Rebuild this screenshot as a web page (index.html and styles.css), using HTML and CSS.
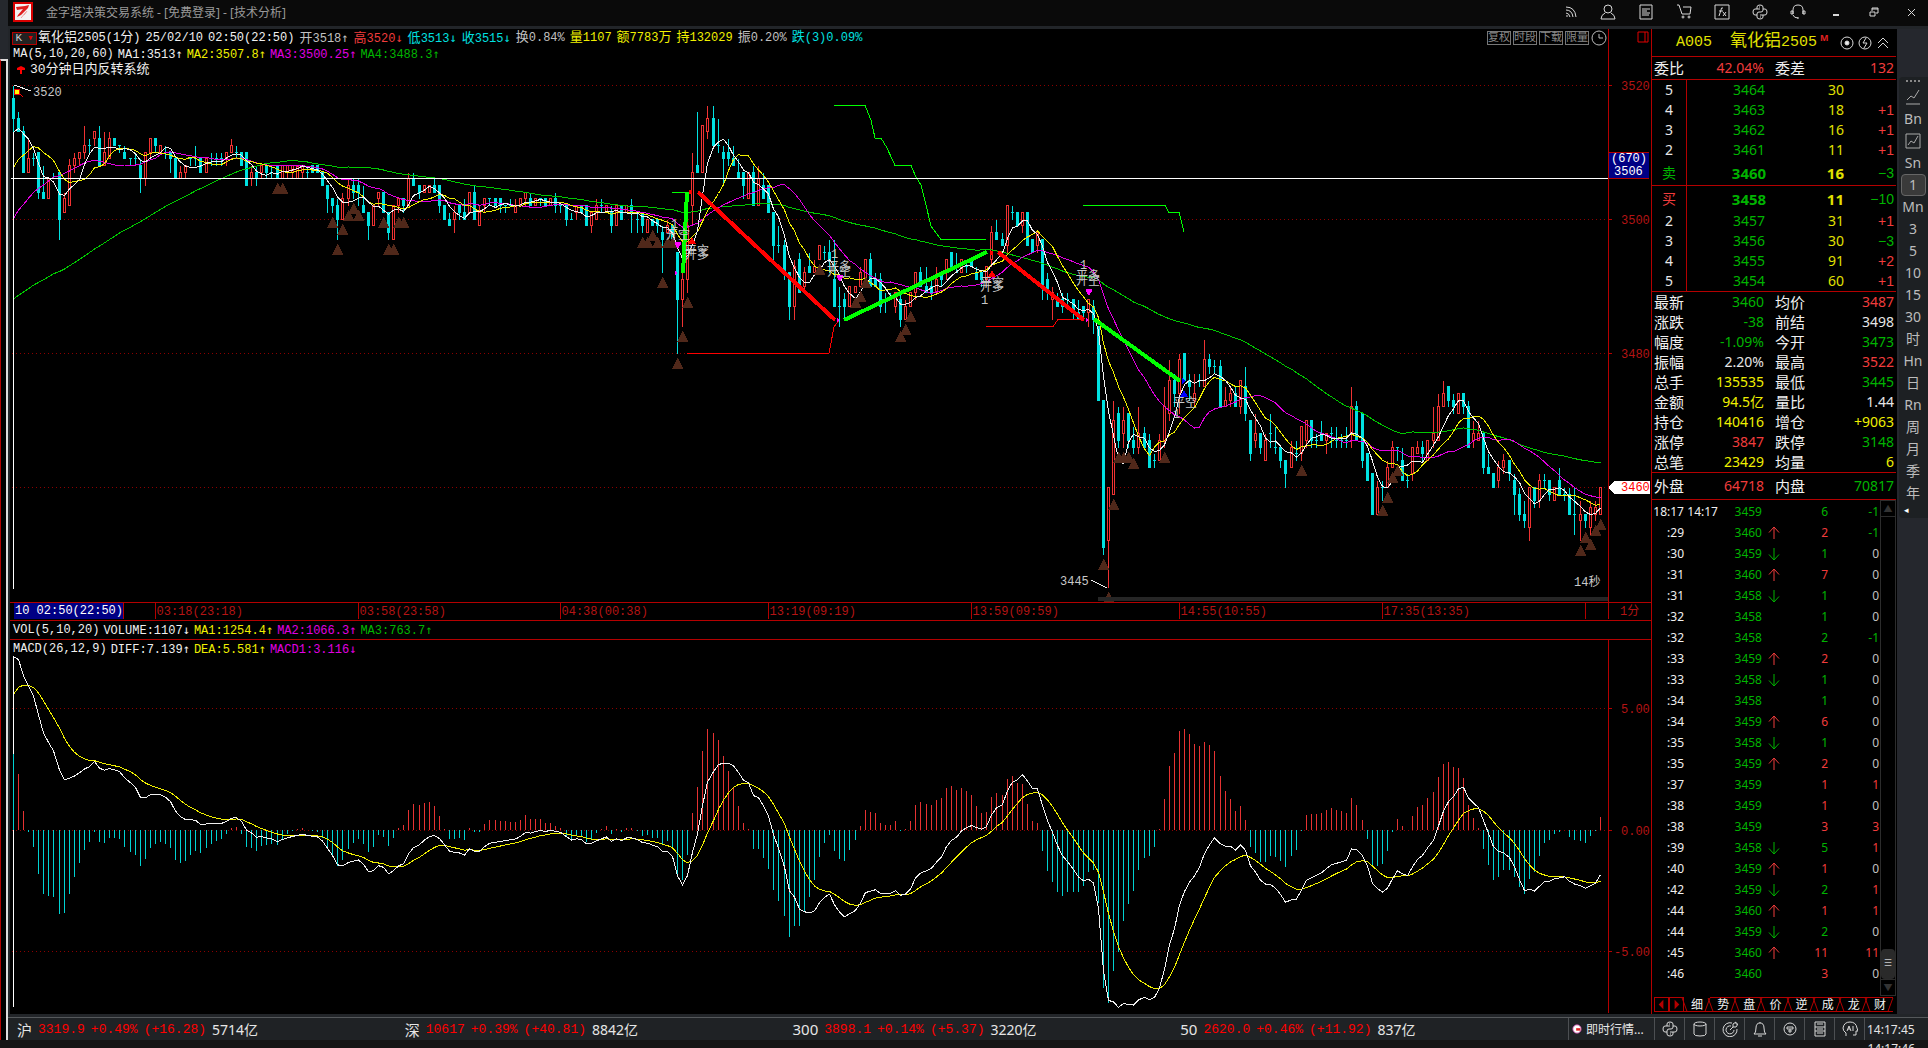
FILE: index.html
```html
<!DOCTYPE html>
<html lang="zh-CN">
<head>
    <meta charset="UTF-8">
    <meta name="viewport" content="width=device-width, initial-scale=1.0">
    <title>金字塔决策交易系统</title>
    <link rel="stylesheet" href="styles.css">
</head>
<body>

<svg class="defs" aria-hidden="true">
    <symbol id="i-up" viewBox="0 0 12 14"><path d="M6 13V1M1 6.500L6 1l5 5.500"/></symbol>
    <symbol id="i-down" viewBox="0 0 12 14"><path d="M6 1v12M1 7.500L6 13l5-5.500"/></symbol>
    <symbol id="i-python" viewBox="0 0 16 16">
        <path d="M5 5V3q0-2 3-2t3 2v3q0 2-2 2H7q-2 0-2 2v1H3q-2 0-2-3t2-3h5M11 11v2q0 2-3 2t-3-2v-2M11 5h2q2 0 2 3t-2 3H8"/>
        <path d="M7 3h1M8 13h1"/>
    </symbol>
</svg>

<div class="screen">
    <div class="edge"></div>

    <div class="window">
        <header class="titlebar">
            <svg class="logo" viewBox="0 0 20 20">
                <rect width="20" height="20" fill="#d80000" stroke="none"/>
                <rect x="2" y="2" width="16" height="16" fill="#f4f4f4" stroke="none"/>
                <path d="M3 5l9-1 4-1-1 3-7 7-4 2 1-2 5-6-6 1z" fill="#e02020" stroke="none"/>
                <path d="M8 16l5-6M11 13l3-4" stroke="#f0a0a0"/>
            </svg>
            <h1>金字塔决策交易系统 - [免费登录] - [技术分析]</h1>
            <nav class="title-icons">
                <button type="button" aria-label="资讯"><svg viewBox="0 0 16 16"><path d="M4 12h2M4 9q3 0 4 4M4 6q6 0 7 7M4 3q9 0 10 10"/></svg></button>
                <button type="button" aria-label="用户"><svg viewBox="0 0 16 16"><circle cx="8" cy="5" r="4"/><path d="M1 15q0-4 4-6M15 15q0-4-4-6M1 15h14"/></svg></button>
                <button type="button" aria-label="公告"><svg viewBox="0 0 16 16"><path d="M2 1h12v14H2zM4 5h8M4 7h5M4 9h8M4 11h7"/></svg></button>
                <button type="button" aria-label="商城"><svg viewBox="0 0 16 16"><path d="M1 1h2l3 9h8l1-7H7"/><circle cx="7" cy="13" r="1"/><circle cx="13" cy="13" r="1"/></svg></button>
                <button type="button" aria-label="公式"><svg viewBox="0 0 16 16"><path d="M1 1h14v14H1zM9 4q-2-1-2 2l-2 6M5 7h4M9 8l3 4M12 8l-3 4"/></svg></button>
                <button type="button" aria-label="Python"><svg viewBox="0 0 16 16"><use href="#i-python"/></svg></button>
                <button type="button" aria-label="客服"><svg viewBox="0 0 16 16"><path d="M3 10V6q0-5 5-5t5 5v4M1 7v3h2V7zM13 7v3h2V7zM3 11q1 3 5 3M7 14h2"/></svg></button>
                <button type="button" aria-label="最小化"><svg viewBox="0 0 16 16"><path d="M5 11h6" stroke-width="2"/></svg></button>
                <button type="button" aria-label="还原"><svg viewBox="0 0 16 16"><path d="M4 8h5v4H4zM6 7V4h6v5h-2M6 5h6"/></svg></button>
                <button type="button" aria-label="关闭"><svg viewBox="0 0 16 16"><path d="M4 5l7 7M11 5l-7 7"/></svg></button>
            </nav>
        </header>

        <div class="body">
            <main class="charts">
                <section class="pane-head">
                    <div class="pane-text">
                        <div class="line">
                            <button type="button" class="k-button">K<span>▾</span></button>
                            <span class="w"><b>氧化铝</b>2505(1<b>分</b>)</span>
                            <span class="w">25/02/10</span>
                            <span class="w">02:50(22:50)</span>
                            <span class="g"><b>开</b>3518<i>↑</i></span>
                            <span class="r"><b>高</b>3520<i>↓</i></span>
                            <span class="c"><b>低</b>3513<i>↓</i></span>
                            <span class="c"><b>收</b>3515<i>↓</i></span>
                            <span class="g"><b>换</b>0.84%</span>
                            <span class="y"><b>量</b>1107</span>
                            <span class="y"><b>额</b>7783<b>万</b></span>
                            <span class="y"><b>持</b>132029</span>
                            <span class="g"><b>振</b>0.20%</span>
                            <span class="c"><b>跌</b>(3)0.09%</span>
                            <div class="chart-tools">
                                <button type="button">复权</button>
                                <button type="button">时段</button>
                                <button type="button">下载</button>
                                <button type="button">限量</button>
                                <svg viewBox="0 0 16 16"><circle cx="8" cy="8" r="7"/><path d="M8 4v4h4"/></svg>
                            </div>
                        </div>
                        <div class="line tight">
                            <span class="w">MA(5,10,20,60)</span>
                            <span class="w">MA1:3513<i>↑</i></span>
                            <span class="y">MA2:3507.8<i>↑</i></span>
                            <span class="m">MA3:3500.25<i>↑</i></span>
                            <span class="gr">MA4:3488.3<i>↑</i></span>
                        </div>
                        <div class="line system">
                            <svg viewBox="0 0 8 8"><path d="M4 0l4 2v2H5v4H3V4H0V2z"/></svg>
                            <span class="w"><b>30分钟日内反转系统</b></span>
                        </div>
                    </div>
                    <div class="pane-axis"><svg viewBox="0 0 12 12"><path d="M1 1h10v10H1zM8 1v10"/></svg></div>
                </section>
                <svg class="plot" id="price-plot" viewBox="10 77 1641 544"></svg>

                <section class="vol-line line tight">
                    <span class="w">VOL(5,10,20)</span>
                    <span class="w">VOLUME:1107<i>↓</i></span>
                    <span class="y">MA1:1254.4<i>↑</i></span>
                    <span class="m">MA2:1066.3<i>↑</i></span>
                    <span class="gr">MA3:763.7<i>↑</i></span>
                </section>

                <section class="pane-head">
                    <div class="pane-text">
                        <div class="line tight">
                            <span class="w">MACD(26,12,9)</span>
                            <span class="w">DIFF:7.139<i>↑</i></span>
                            <span class="y">DEA:5.581<i>↑</i></span>
                            <span class="m">MACD1:3.116<i>↓</i></span>
                        </div>
                    </div>
                    <div class="pane-axis"></div>
                </section>
                <svg class="plot" id="macd-plot" viewBox="10 656 1641 358"></svg>
            </main>

            <aside class="quote">
                <div class="quote-title">
                    <span class="code">A005</span>
                    <span class="code"><b>氧化铝</b>2505</span>
                    <sup>M</sup>
                    <svg viewBox="0 0 16 16"><circle cx="8" cy="8" r="6"/><circle cx="8" cy="8" r="2" fill="#eee"/></svg>
                    <svg viewBox="0 0 16 16"><circle cx="8" cy="8" r="6"/><path d="M9 3L6 8h4l-3 5"/></svg>
                    <svg viewBox="0 0 16 16"><path d="M3 8l5-5 5 5M3 13l5-5 5 5"/></svg>
                </div>

                <table class="stats single">
                    <tr><th>委比</th><td class="r">42.04%</td><th>委差</th><td class="r">132</td></tr>
                </table>

                <table class="book">
                    <tr><th>5</th><td>3464</td><td>30</td><td></td></tr>
                    <tr><th>4</th><td>3463</td><td>18</td><td class="r">+1</td></tr>
                    <tr><th>3</th><td>3462</td><td>16</td><td class="r">+1</td></tr>
                    <tr><th>2</th><td>3461</td><td>11</td><td class="r">+1</td></tr>
                    <tr class="best"><th class="gr">卖</th><td>3460</td><td>16</td><td class="gr">−3</td></tr>
                </table>
                <table class="book">
                    <tr class="best"><th class="r">买</th><td>3458</td><td>11</td><td class="gr">−10</td></tr>
                    <tr><th>2</th><td>3457</td><td>31</td><td class="r">+1</td></tr>
                    <tr><th>3</th><td>3456</td><td>30</td><td class="gr">−3</td></tr>
                    <tr><th>4</th><td>3455</td><td>91</td><td class="r">+2</td></tr>
                    <tr><th>5</th><td>3454</td><td>60</td><td class="r">+1</td></tr>
                </table>

                <table class="stats">
                    <tr><th>最新</th><td class="gr">3460</td><th>均价</th><td class="r">3487</td></tr>
                    <tr><th>涨跌</th><td class="gr">-38</td><th>前结</th><td>3498</td></tr>
                    <tr><th>幅度</th><td class="gr">-1.09%</td><th>今开</th><td class="gr">3473</td></tr>
                    <tr><th>振幅</th><td>2.20%</td><th>最高</th><td class="r">3522</td></tr>
                    <tr><th>总手</th><td class="y">135535</td><th>最低</th><td class="gr">3445</td></tr>
                    <tr><th>金额</th><td class="y">94.5亿</td><th>量比</th><td>1.44</td></tr>
                    <tr><th>持仓</th><td class="y">140416</td><th>增仓</th><td class="y">+9063</td></tr>
                    <tr><th>涨停</th><td class="r">3847</td><th>跌停</th><td class="gr">3148</td></tr>
                    <tr><th>总笔</th><td class="y">23429</td><th>均量</th><td class="y">6</td></tr>
                </table>
                <table class="stats last">
                    <tr><th>外盘</th><td class="r">64718</td><th>内盘</th><td class="gr">70817</td></tr>
                </table>

                <div class="ticks">
                    <table id="tick-table"></table>
                    <div class="scroll">
                        <button type="button" aria-label="向上">▲</button>
                        <div class="track"><div class="thumb">☰</div></div>
                        <button type="button" aria-label="向下">▼</button>
                    </div>
                </div>

                <div class="tabs">
                    <button type="button" class="step" aria-label="上一页"><svg viewBox="0 0 14 14"><path d="M9 2v10L4 7z"/></svg></button>
                    <button type="button" class="step" aria-label="下一页"><svg viewBox="0 0 14 14"><path d="M5 2v10l5-5z"/></svg></button>
                    <button type="button" class="tab on">细</button>
                    <button type="button" class="tab">势</button>
                    <button type="button" class="tab">盘</button>
                    <button type="button" class="tab">价</button>
                    <button type="button" class="tab">逆</button>
                    <button type="button" class="tab">成</button>
                    <button type="button" class="tab">龙</button>
                    <button type="button" class="tab">财</button>
                </div>
            </aside>

            <nav class="periods">
                <div class="period-box">
                    <span class="grip"></span>
                    <button type="button" aria-label="分时"><svg viewBox="0 0 16 16"><path d="M1 15h14M2 11l4-4 3 2 5-8"/></svg></button>
                    <button type="button">Bn</button>
                    <button type="button" aria-label="走势"><svg viewBox="0 0 16 16"><path d="M1 1h14v14H1zM3 12l3-4 3 2 4-7"/></svg></button>
                    <button type="button">Sn</button>
                    <button type="button" class="on">1</button>
                    <button type="button">Mn</button>
                    <button type="button">3</button>
                    <button type="button">5</button>
                    <button type="button">10</button>
                    <button type="button">15</button>
                    <button type="button">30</button>
                    <button type="button">时</button>
                    <button type="button">Hn</button>
                    <button type="button">日</button>
                    <button type="button">Rn</button>
                    <button type="button">周</button>
                    <button type="button">月</button>
                    <button type="button">季</button>
                    <button type="button">年</button>
                    <span class="more">◂</span>
                </div>
            </nav>
        </div>

        <footer class="status">
            <div class="indices">
                <div><b>沪</b><span>3319.9</span><span>+0.49%</span><span>(+16.28)</span><em>5714亿</em></div>
                <div><b>深</b><span>10617</span><span>+0.39%</span><span>(+40.81)</span><em>8842亿</em></div>
                <div><b>300</b><span>3898.1</span><span>+0.14%</span><span>(+5.37)</span><em>3220亿</em></div>
                <div><b>50</b><span>2620.0</span><span>+0.46%</span><span>(+11.92)</span><em>837亿</em></div>
            </div>
            <button type="button" class="news"><svg viewBox="0 0 12 12"><circle cx="6" cy="6" r="5" fill="#fff" stroke="#c040a0"/><path d="M5 5h5v3H5z" fill="#e02020" stroke="none"/></svg>即时行情...</button>
            <button type="button" class="cell" aria-label="Python"><svg viewBox="0 0 16 16"><use href="#i-python"/></svg></button>
            <button type="button" class="cell" aria-label="数据"><svg viewBox="0 0 16 16"><ellipse cx="8" cy="3" rx="6" ry="2"/><path d="M2 3v10q0 2 6 2t6-2V3"/></svg></button>
            <button type="button" class="cell" aria-label="雷达"><svg viewBox="0 0 16 16"><path d="M10 2a7 7 0 1 0 5 6M9 5a4 4 0 1 0 3 4M8 9l3-3V3l3-2v2h2l-2 3h-3"/></svg></button>
            <button type="button" class="cell" aria-label="提醒"><svg viewBox="0 0 16 16"><path d="M8 1v1M2 13q2-1 2-6 0-5 4-5t4 5q0 5 2 6zM6 15h4"/></svg></button>
            <button type="button" class="cell" aria-label="连接"><svg viewBox="0 0 16 16"><circle cx="8" cy="8" r="6"/><path d="M5 6h6v2H5zM8 8v4M6 10h4"/></svg></button>
            <button type="button" class="cell" aria-label="服务器"><svg viewBox="0 0 16 16"><path d="M3 1h10v14H3zM3 6h10M3 10h10M5 3h6M5 8h6M5 12h6"/></svg></button>
            <button type="button" class="cell" aria-label="AI"><svg viewBox="0 0 16 16"><path d="M4 15v-3Q1 10 1 7q1-6 7-6t7 6l1 3h-2v4h-3M5 10l2-5 2 5M6 8h2M11 5v5"/></svg></button>
            <time>14:17:45</time>
        </footer>
    </div>

    <div class="under"><time>14:17:46</time></div>
</div>

<script src="script.js"></script>
</body>
</html>
```
FILE: styles.css
```css
* {
    box-sizing: border-box;
}

body {
    margin: 0;
    background: #151515;
    color: #e6e6e6;
    font-family: "Noto Sans", "Noto Sans CJK SC", sans-serif;
    font-size: 14px;
}

button {
    margin: 0;
    padding: 0;
    border: 0;
    background: none;
    color: inherit;
    font: inherit;
    cursor: pointer;
}

svg {
    display: block;
    fill: none;
    stroke: #d8d8d8;
}

table {
    border-collapse: separate;
    border-spacing: 0;
}

.defs {
    position: absolute;
    width: 0;
    height: 0;
}

/* 颜色 */
.w { color: #f0f0f0; }
.g { color: #c0c0c0; }
.r { color: #f03c3c; }
.c { color: #00e1e1; }
.y { color: #f0f000; }
.m { color: #e100e1; }
.gr { color: #00b400; }

/* 整体框架 */
.screen {
    display: grid;
    grid-template-columns: 8px 1fr;
    overflow: hidden;
}

.edge {
    margin-top: 59px;
    border-top: 2px solid #ddd;
    border-right: 2px solid #ddd;
    border-left: 1px solid #b40000;
    background: #000;
    box-shadow: 0 -59px 0 #25282d;
}

.window {
    min-width: 0;
    background: #222529;
}

.titlebar {
    display: flex;
    align-items: center;
    height: 26px;
    margin-bottom: 3px;
    padding: 0 8px 2px 5px;
    background: #0a0a0a;
}

.logo {
    width: 20px;
    height: 20px;
}

.titlebar h1 {
    flex: 1;
    margin: 0 0 0 13px;
    color: #999;
    font-size: 12px;
    font-weight: 400;
}

.title-icons {
    display: flex;
    gap: 22px;
}

.title-icons svg {
    width: 16px;
    height: 16px;
}

.body {
    display: grid;
    grid-template-columns: 1fr 246px 31px;
    margin-bottom: 3px;
    margin-left: 2px;
}

/* 图表区 */
.charts {
    min-width: 0;
    background: #000;
}

.pane-head {
    display: grid;
    grid-template-columns: 1fr 43px;
}

.pane-axis {
    border-left: 1px solid #b40000;
}

.pane-axis svg {
    width: 12px;
    height: 12px;
    margin: 2px 0 0 28px;
    stroke: #e00000;
}

.line {
    display: flex;
    align-items: center;
    gap: 5px;
    height: 16px;
    padding: 2px 0 0 3px;
    font-family: "Liberation Mono", "Noto Sans CJK SC", monospace;
    font-size: 12px;
    line-height: 14px;
    white-space: nowrap;
}

.line b {
    font-size: 13px;
    font-weight: 400;
}

.line i {
    font-family: "DejaVu Sans Mono", monospace;
    font-style: normal;
}

.line.tight {
    gap: 4px;
}

.k-button {
    display: flex;
    justify-content: space-around;
    width: 25px;
    height: 13px;
    margin: 0 -4px 0 -1px;
    border: 1px solid #b40000;
    background: #222;
    font-size: 11px;
    line-height: 11px;
    color: #ccc;
}

.k-button span {
    color: #d00;
}

.line.system {
    gap: 5px;
    padding-left: 7px;
}

.system svg {
    width: 8px;
    height: 8px;
    fill: #f00;
    stroke: none;
}

.chart-tools {
    display: flex;
    align-items: center;
    gap: 2px;
    margin-left: auto;
    padding-right: 1px;
}

.chart-tools button {
    width: 24px;
    height: 14px;
    border: 1px solid #777;
    color: #888;
    font-size: 11px;
    line-height: 12px;
}

.chart-tools svg {
    width: 16px;
    height: 16px;
    stroke: #bbb;
}

.plot {
    width: 100%;
    height: auto;
    shape-rendering: crispEdges;
}

.plot text {
    stroke: none;
    font-family: "Liberation Mono", "Noto Sans CJK SC", monospace;
    font-size: 12px;
}

.vol-line {
    height: 19px;
    padding-top: 0;
    border-bottom: 1px solid #b40000;
}

/* 图形 */
.grid { stroke: #8c0000; stroke-dasharray: 1 3; }
.axis { stroke: #b40000; }
.axis-text { fill: #b41414; }
.up { fill: #000; stroke: #f03232; }
.dn { fill: #00e1e1; stroke: #00e1e1; }
.bar-up { stroke: #e63232; }
.bar-dn { stroke: #00d2d2; }
.ma { stroke-width: 1; }
.ma-w { stroke: #f0f0f0; }
.ma-y { stroke: #f0f000; }
.ma-m { stroke: #e100e1; }
.ma-g { stroke: #00c800; }
.mark { fill: #50281a; stroke: none; }
.cursor { stroke: #fff; }
.thick-g { stroke: #0f0; stroke-width: 4; }
.thick-r { stroke: #f00; stroke-width: 4; }
.thin-g { stroke: #0f0; }
.thin-r { stroke: #f00; }
.sig-m { fill: #f0f; stroke: none; }
.sig-r { fill: #f00; stroke: none; }
.sig-b { fill: #00f; stroke: none; }
.note { fill: #c8c8c8; }
.blue-box { fill: #000084; stroke: none; }
.range { fill: #262626; stroke: none; }
.white { fill: #fff; stroke: none; }
.lens { fill: #ff0; stroke: #e00; }

/* 报价面板 */
.quote {
    display: flex;
    flex-direction: column;
    padding-right: 1px;
    border-left: 1px solid #b40000;
    background: #000;
}

.quote-title {
    display: flex;
    align-items: center;
    height: 28px;
    padding: 0 4px 0 24px;
    border-bottom: 1px solid #b40000;
    color: #e1e100;
}

.quote-title .code {
    margin-right: 18px;
    font-family: "Liberation Mono", "Noto Sans CJK SC", monospace;
    font-size: 15px;
    line-height: 24px;
    white-space: nowrap;
}

.quote-title .code + .code {
    margin-right: 3px;
}

.quote-title b {
    font-size: 17px;
    font-weight: 400;
}

.quote-title sup {
    align-self: flex-start;
    margin-right: auto;
    padding-top: 4px;
    color: #e02020;
    font-size: 9px;
    font-weight: 700;
    line-height: 9px;
}

.quote-title svg {
    width: 16px;
    height: 16px;
    margin: 0 1px;
}

.stats {
    width: 100%;
    table-layout: fixed;
    border-bottom: 1px solid #b40000;
}

.stats tr {
    height: 20px;
}

.stats.single tr {
    height: 22px;
}

.stats.last tr {
    height: 26px;
}

.stats th,
.stats td {
    padding: 0 2px;
    line-height: 20px;
    white-space: nowrap;
}

.stats th {
    width: 42px;
    color: #f0f0f0;
    font-size: 15px;
    font-weight: 400;
    text-align: left;
}

.stats th + td {
    text-align: right;
}

.stats td:nth-child(2) {
    width: 72px;
}

.stats th:nth-child(3) {
    width: 50px;
    padding-left: 9px;
}

.book {
    width: 100%;
    table-layout: fixed;
    border-bottom: 1px solid #b40000;
}

.book tr {
    height: 20px;
}

.book .best {
    height: 25px;
}

.book th,
.book td {
    padding: 0;
    line-height: 20px;
}

.book th {
    width: 35px;
    border-right: 1px solid #b40000;
    font-weight: 400;
}

.book td:nth-child(2) {
    width: 124px;
    color: #00b400;
    text-align: center;
}

.book td:nth-child(3) {
    width: 33px;
    color: #e1e100;
    text-align: right;
}

.book td:nth-child(4) {
    padding-right: 2px;
    font-family: "Liberation Sans", sans-serif;
    text-align: right;
}

.best td:nth-child(2),
.best td:nth-child(3) {
    font-size: 15px;
    font-weight: 700;
}

/* 成交明细 */
.ticks {
    display: flex;
    align-items: flex-start;
    flex: 1;
    font-size: 12px;
}

.ticks table {
    flex: 1;
    table-layout: fixed;
    margin-top: 1px;
}

.ticks tr {
    height: 21px;
}

.ticks td {
    padding: 0;
    line-height: 21px;
    text-align: right;
}

.ticks td:nth-child(1) { width: 32px; }
.ticks td:nth-child(2) { width: 34px; }
.ticks td:nth-child(3) { width: 44px; }
.ticks td:nth-child(4) { width: 24px; }
.ticks td:nth-child(5) { width: 42px; }
.ticks td:nth-child(6) { padding-right: 1px; }

.ticks td svg {
    width: 12px;
    height: 14px;
    margin: 0 auto;
    stroke: currentColor;
}

.scroll {
    display: flex;
    flex-direction: column;
    align-self: stretch;
    width: 16px;
    border: 1px solid #2c2c2c;
}

.scroll button {
    height: 15px;
    color: #333;
    font-size: 9px;
    line-height: 14px;
}

.track {
    display: flex;
    flex: 1;
    align-items: flex-end;
    border-top: 1px solid #2c2c2c;
    border-bottom: 1px solid #2c2c2c;
}

.thumb {
    width: 14px;
    height: 30px;
    border-radius: 4px;
    background: #2a2a2a;
    color: #ccc;
    font-size: 9px;
    line-height: 28px;
    text-align: center;
}

.tabs {
    display: flex;
    height: 18px;
    padding: 1px 3px 1px 2px;
}

.step {
    width: 15px;
    height: 15px;
    border: 1px solid #b40000;
}

.step svg {
    width: 13px;
    height: 13px;
    fill: #b40000;
    stroke: none;
}

.tab {
    position: relative;
    flex: 1;
    height: 15px;
    border-top: 1px solid #b40000;
    border-bottom: 1px solid #b40000;
    color: #f0f0f0;
    font-size: 12px;
    line-height: 14px;
}

.tab.on {
    border-top-color: transparent;
}

.tab::before {
    position: absolute;
    top: 0;
    left: 0;
    width: 1px;
    height: 13px;
    background: #b40000;
    content: "";
    transform: skewX(20deg);
}

.tab::after {
    position: absolute;
    top: 0;
    right: 2px;
    width: 1px;
    height: 13px;
    background: #b40000;
    content: "";
    transform: skewX(-20deg);
}

/* 周期工具栏 */
.periods {
    padding: 48px 0 0 2px;
    background: #25272d;
}

.period-box {
    display: flex;
    flex-direction: column;
    align-items: center;
    height: 441px;
    padding-right: 1px;
    border-radius: 4px 0 0 4px;
    background: #1d2023;
    color: #bcbcbc;
}

.period-box button {
    display: flex;
    align-items: center;
    justify-content: center;
    width: 25px;
    height: 22px;
    border-radius: 4px;
    font-size: 14px;
    line-height: 20px;
}

.period-box button.on {
    border: 1px solid #666;
    background: #3a3a3a;
}

.period-box svg {
    width: 16px;
    height: 16px;
    stroke: #aaa;
}

.grip {
    width: 14px;
    height: 2px;
    margin: 3px 0 4px;
    border-top: 2px dotted #888;
}

.more {
    align-self: flex-start;
    margin-left: 5px;
    color: #fff;
    font-size: 9px;
    line-height: 12px;
}

/* 状态栏 */
.status {
    display: flex;
    height: 23px;
    border-top: 1px solid #55585b;
    background: #1f2225;
}

.indices {
    display: grid;
    flex: 1;
    grid-template-columns: repeat(4, 1fr);
    padding-left: 9px;
}

.indices div {
    display: flex;
    align-items: center;
    gap: 6px;
    white-space: nowrap;
}

.indices b {
    font-size: 15px;
    font-weight: 400;
}

.indices span {
    color: #f00;
    font-family: "Liberation Mono", monospace;
    font-size: 13px;
}

.indices em {
    font-style: normal;
}

.status button,
.status time {
    display: flex;
    align-items: center;
    justify-content: center;
    border-left: 1px solid #4c4f52;
}

.status .news {
    justify-content: flex-start;
    width: 86px;
    gap: 4px;
    padding-left: 3px;
    font-size: 12px;
}

.news svg {
    width: 10px;
    height: 10px;
}

.cell {
    width: 30px;
}

.cell svg {
    width: 16px;
    height: 16px;
}

.status time {
    width: 64px;
    justify-content: flex-start;
    padding-left: 2px;
    font-size: 12px;
}

.under {
    grid-column: 1 / -1;
    display: flex;
    justify-content: flex-end;
    height: 8px;
    padding-right: 13px;
    overflow: hidden;
    background: #151515;
    font-size: 12px;
}
```
FILE: script.js
```js
// 每根K线: [开, 收, 高, 低]，都减去 3400
const bars = [
    [118,115,120,113],[115,113,116,113],[113,107,114,107],[107,109,112,107],[109,109,110,108],[110,104,110,103],
    [104,103,108,103],[103,106,106,103],[106,106,107,106],[107,100,107,97],[101,103,104,101],[102,108,109,102],
    [108,109,110,107],[109,110,110,108],[110,111,114,109],[111,111,112,110],[112,113,113,111],[112,108,114,108],
    [108,110,113,108],[109,112,113,109],[112,111,112,111],[111,111,111,110],[110,109,111,109],[109,109,109,108],
    [109,109,110,108],[108,106,109,104],[106,110,110,105],[110,112,112,109],[112,111,112,110],[110,111,111,110],
    [110,110,111,109],[110,109,110,107],[109,106,109,106],[106,107,108,106],[107,108,108,106],[109,109,109,108],
    [109,109,111,108],[109,107,109,107],[107,109,109,107],[109,109,110,108],[109,109,110,108],[109,109,110,108],
    [109,110,110,108],[110,111,112,110],[110,110,111,109],[110,108,110,108],[110,105,110,105],[106,107,108,105],
    [107,106,108,105],[107,108,108,106],[108,107,108,106],[107,107,108,106],[108,106,108,106],[106,108,108,106],
    [107,108,108,106],[107,108,108,106],[106,108,108,106],[107,108,108,106],[107,107,108,106],[108,107,108,107],
    [108,107,108,107],[107,105,107,105],[105,103,105,101],[103,102,103,101],[102,100,103,97],[100,103,104,100],
    [103,105,106,102],[105,104,106,103],[105,104,106,102],[102,101,105,101],[101,99,101,97],[99,102,102,99],
    [103,104,104,102],[104,101,104,101],[101,98,101,97],[97,102,102,97],[102,103,103,101],[103,102,103,101],
    [102,106,107,102],[106,105,107,105],[105,104,105,103],[104,105,105,104],[104,105,105,104],[105,104,106,104],
    [105,102,105,101],[102,100,102,100],[100,99,101,99],[100,101,102,98],[102,101,102,100],[101,100,103,100],
    [101,104,104,101],[104,100,105,100],[99,101,102,99],[102,103,103,101],[103,103,103,102],[103,102,103,102],
    [103,102,103,101],[102,102,102,101],[102,102,103,102],[101,102,103,101],[102,103,103,102],[103,104,104,102],
    [103,102,104,102],[102,103,103,102],[103,103,103,102],[103,102,103,102],[102,103,103,102],[103,102,104,101],
    [102,102,102,101],[102,100,102,99],[100,100,101,100],[101,102,102,100],[102,101,102,101],[102,99,102,99],
    [99,101,101,98],[100,102,103,100],[102,102,103,101],[101,102,102,101],[101,99,102,98],[99,102,102,99],
    [102,100,102,100],[101,102,102,101],[102,101,103,98],[100,100,101,98],[101,99,101,98],[98,100,100,98],
    [100,99,100,99],[100,99,100,98],[98,97,99,92],[98,99,100,98],[99,96,99,98],[95,88,95,80],
    [88,91,92,84],[91,99,102,89],[102,107,110,99],[108,107,116,107],[107,114,114,107],[113,115,117,112],
    [115,111,117,111],[111,111,115,110],[110,109,111,105],[110,109,112,108],[109,108,111,108],[107,106,109,106],
    [107,105,107,103],[103,107,107,103],[107,102,108,102],[102,106,108,102],[105,103,107,103],[105,101,105,101],
    [101,96,101,94],[96,96,99,95],[96,92,97,91],[92,87,92,85],[87,93,94,85],[94,89,95,89],
    [90,92,93,89],[93,92,95,92],[92,93,94,92],[94,96,96,94],[95,95,96,94],[95,94,97,92],
    [91,87,97,87],[87,87,90,84],[88,87,89,85],[87,90,90,87],[89,90,90,89],[90,92,93,90],
    [91,94,94,92],[94,90,95,90],[91,90,92,90],[91,87,92,86],[88,88,89,86],[88,88,89,88],
    [87,89,89,86],[88,85,89,84],[85,87,88,85],[87,89,89,87],[89,92,92,88],[92,90,93,90],
    [90,89,93,89],[90,89,91,88],[89,91,93,89],[92,91,92,90],[92,94,94,91],[95,93,95,93],
    [92,92,95,92],[92,94,94,92],[93,93,94,92],[94,93,94,93],[92,91,93,91],[92,91,92,90],
    [91,93,93,90],[94,98,99,93],[98,97,100,97],[97,96,98,96],[96,102,102,95],[101,101,102,100],
    [101,99,101,99],[99,101,101,98],[101,96,101,96],[97,95,97,95],[96,98,98,95],[97,90,97,88],
    [91,89,92,88],[88,89,90,85],[88,87,89,87],[88,87,89,86],[88,88,89,87],[88,86,88,85],
    [86,85,88,85],[87,86,87,85],[86,88,88,84],[87,85,88,83],[84,73,84,73],[73,51,73,50],
    [52,60,60,45],[59,70,73,59],[71,67,72,66],[68,70,72,66],[71,67,71,66],[67,66,69,65],
    [66,68,72,65],[68,66,69,66],[67,63,68,63],[64,64,65,63],[64,67,68,64],[67,72,75,66],
    [71,76,79,70],[76,74,77,72],[74,79,80,71],[80,76,80,76],[76,75,77,73],[73,74,77,72],
    [76,76,77,75],[75,79,82,75],[79,78,80,77],[78,78,79,77],[78,72,79,72],[72,73,75,72],
    [73,74,75,72],[74,72,75,72],[72,76,76,71],[75,71,78,70],[70,65,70,64],[67,68,71,66],
    [68,66,68,65],[64,67,68,64],[68,68,71,66],[66,66,69,65],[66,64,66,63],[64,62,64,60],
    [63,66,67,63],[65,65,67,64],[65,69,69,64],[67,70,70,66],[70,67,70,66],[67,67,68,66],
    [68,67,70,67],[67,68,68,65],[68,68,69,66],[67,67,69,66],[67,67,68,66],[67,67,69,66],
    [68,72,75,66],[72,67,73,67],[71,64,71,63],[65,61,65,61],[62,56,62,56],[56,60,61,56],
    [60,60,61,58],[60,63,64,60],[63,66,67,63],[66,66,66,64],[64,61,66,61],[61,61,62,60],
    [62,66,66,61],[65,66,67,65],[66,65,67,64],[64,67,67,64],[67,68,72,66],[67,72,74,67],
    [72,74,76,72],[75,73,75,72],[73,72,74,71],[71,74,74,71],[74,72,74,71],[72,66,73,66],
    [67,68,70,66],[67,68,70,67],[68,63,68,62],[63,62,65,62],[62,60,62,60],[61,63,64,60],
    [63,64,65,62],[64,62,64,61],[61,59,62,56],[59,56,60,55],[56,55,58,54],[54,60,60,52],
    [60,58,60,57],[58,61,62,57],[61,61,62,60],[61,59,61,58],[58,60,60,58],[61,59,63,59],
    [59,59,60,58],[59,56,60,56],[56,56,60,53],[55,56,58,52],[56,55,56,54],[54,57,58,53],
    [56,57,58,55],[56,60,60,56]
];

// 第一根之前的收盘价，均线要用到
const before = [];
for (let i = 0; i < 40; i++) before.push(78 + i * 0.21);
for (let i = 0; i < 10; i++) before.push(89 + i * 0.8);
before.push(101, 101, 102, 103, 106, 110, 111, 113, 116);

// 带反转标记的K线
const marks = [52, 53, 63, 64, 65, 66, 67, 68, 73, 74, 75, 76, 77, 124, 125, 126, 127, 128, 129, 130, 131, 132, 133,
    159, 166, 167, 168, 175, 176, 177, 215, 216, 217, 218, 219, 220, 221, 227, 254, 270, 271, 272, 273,
    309, 310, 311, 312, 313];

const barX = i => Math.floor(13.4 + i * 5.07) + 0.5;
const priceY = p => Math.floor(85 + (120 - p) * 6.705) + 0.5;
const macdY = v => 830 - v * 24.3;

const line = (x1, y1, x2, y2, cls) => `<line x1="${x1}" y1="${y1}" x2="${x2}" y2="${y2}" class="${cls}"/>`;
const poly = (points, cls) => `<polyline points="${points}" class="${cls}"/>`;
const text = (x, y, s, cls) => `<text x="${x}" y="${y}" class="${cls}">${s}</text>`;
const rect = (x, y, w, h, cls) => `<rect x="${x}" y="${y}" width="${w}" height="${h}" class="${cls}"/>`;

function movingAverage(n) {
    const closes = before.concat(bars.map(b => b[1]));
    return bars.map((b, i) => {
        const end = i + before.length + 1;
        const part = closes.slice(Math.max(0, end - n), end);
        return part.reduce((a, c) => a + c, 0) / part.length;
    });
}

function drawPrice() {
    let s = '';

    // 网格和坐标
    [120, 100, 80, 60].forEach(p => {
        s += line(12, priceY(p), 1608, priceY(p), 'grid');
        s += line(1608, priceY(p), 1612, priceY(p), 'axis');
        if (p !== 60) s += text(1621, priceY(p) + 4, 3400 + p, 'axis-text');
    });

    // K线
    bars.forEach(([open, close, high, low], i) => {
        const x = barX(i);
        const cls = close > open ? 'up' : 'dn';
        const top = priceY(Math.max(open, close));
        const bottom = priceY(Math.min(open, close));
        s += line(x, priceY(high), x, priceY(low), cls);
        s += rect(x - 1, top, 2, Math.max(bottom - top, 0.1), cls);
    });

    // 均线
    [[60, 'ma-g'], [20, 'ma-m'], [10, 'ma-y'], [5, 'ma-w']].forEach(([n, cls]) => {
        const points = movingAverage(n).map((v, i) => barX(i) + ',' + (85.5 + (120 - v) * 6.705).toFixed(1));
        s += poly(points.join(' '), 'ma ' + cls);
    });

    marks.forEach(i => {
        const x = barX(i);
        const y = priceY(bars[i][3]) + 4;
        s += `<path d="M${x} ${y}l5.500 11h-11z" class="mark"/>`;
    });

    // 止损线
    s += poly('672,192 686,192', 'thin-g');
    s += poly('834,105.5 865,105.5 871,120 875,138 881,138 887,148 895,165.5 911,165.5 916,177 921,185 926,205 931,226 941,239.5 986,239.5', 'thin-g');
    s += poly('1083,205.5 1165,205.5 1169,212.5 1179,212.5 1184,232', 'thin-g');
    s += poly('687,353.5 829,353.5 834,327 839,320', 'thin-r');
    s += poly('986,326.5 1053,326.5 1058,319.5 1084,319.5', 'thin-r');

    // 交易连线
    s += line(683, 273, 687, 192, 'thick-g');
    s += line(698, 192, 835, 320, 'thick-r');
    s += line(844, 320, 987, 252, 'thick-g');
    s += line(998, 252, 1084, 320, 'thick-r');
    s += line(1094, 319, 1180, 381, 'thick-g');

    // 开平仓信号
    [[678, 242], [840, 275], [1089, 289]].forEach(([x, y]) => {
        s += `<path d="M${x - 3} ${y}h6v2l-3 5-3-5z" class="sig-m"/>`;
    });
    [[676, 273], [838, 320], [1087, 320]].forEach(([x, y]) => {
        s += `<path d="M${x - 1} ${y - 2}l3 2-3 2z" class="sig-m"/>`;
    });
    [[692, 237], [992, 270]].forEach(([x, y]) => {
        s += `<path d="M${x} ${y}l4 7h-8z" class="sig-r"/>`;
    });
    s += rect(689, 190, 3, 4, 'sig-r') + rect(990, 251, 3, 4, 'sig-r');
    s += '<path d="M1184 390l4 7h-8z" class="sig-b"/><path d="M1182 378l3 3-3 3z" class="sig-b"/>';
    s += text(666, 239, '开空', 'note') + text(671, 228, '1', 'note');
    s += text(685, 255, '平空', 'note') + text(685, 259, '开多', 'note');
    s += text(827, 271, '平多', 'note') + text(827, 276, '开空', 'note') + text(831, 258, '1', 'note');
    s += text(980, 287, '平空', 'note') + text(980, 291, '开多', 'note') + text(981, 304, '1', 'note');
    s += text(1076, 280, '平多', 'note') + text(1076, 285, '开空', 'note') + text(1080, 269, '1', 'note');
    s += text(1173, 407, '平空', 'note') + text(1173, 418, '1', 'note');

    // 最高最低
    s += poly('14,85 31,91', 'ma-w') + text(33, 96, '3520', 'note');
    s += text(1060, 585, '3445', 'note') + poly('1091,580 1107,588', 'ma-w');
    s += text(1574, 586, '14秒', 'note');
    s += '<path d="M19 93l4 4" class="thin-r"/><circle cx="17" cy="92" r="3" class="lens"/>';

    // 光标
    s += line(11, 178.5, 1608, 178.5, 'cursor');
    s += line(13.5, 132, 13.5, 589, 'cursor');
    s += rect(1609, 153, 40, 25, 'blue-box');
    s += line(1609, 152.5, 1649, 152.5, 'axis') + line(1609, 178.5, 1649, 178.5, 'axis');
    s += text(1611, 162, '(670)', 'white') + text(1614, 175, '3506', 'white');
    s += '<path d="M1608 487l6-6h36v13h-36z" class="white"/>' + text(1621, 491, '3460', 'sig-r');

    // 时间轴
    s += rect(1098, 597, 510, 4, 'range');
    s += line(10, 602.5, 1651, 602.5, 'axis') + line(10, 620.5, 1651, 620.5, 'axis');
    s += line(1608.5, 77, 1608.5, 619, 'axis');
    const times = ['03:18(23:18)', '03:58(23:58)', '04:38(00:38)', '13:19(09:19)', '13:59(09:59)', '14:55(10:55)', '17:35(13:35)', ''];
    [28, 68, 108, 149, 189, 230, 270, 310].forEach((bar, i) => {
        s += line(barX(bar), 603, barX(bar), 619, 'axis');
        s += text(barX(bar) + 1, 615, times[i], 'axis-text');
    });
    s += rect(14, 603, 109, 16, 'blue-box') + line(123.5, 603, 123.5, 619, 'axis');
    s += text(15, 614, '10 02:50(22:50)', 'white');
    s += text(1620, 615, '1分', 'axis-text');

    document.getElementById('price-plot').innerHTML = s;
}

function drawMacd() {
    let s = '';
    [[5, '5.00'], [0, '0.00'], [-5, '-5.00']].forEach(([v, label]) => {
        const y = Math.floor(macdY(v)) + 0.5;
        s += line(12, y, 1608, y, 'grid') + line(1608, y, 1612, y, 'axis');
        s += text(v < 0 ? 1614 : 1621, y + 4, label, 'axis-text');
    });

    let fast = 108;
    let slow = fast - 7.139;
    let dea = 5.581;
    const diffs = [];
    const deas = [];
    bars.forEach((b, i) => {
        if (i > 0) {
            fast += (b[1] - fast) * 2 / 13;
            slow += (b[1] - slow) * 2 / 27;
            dea += (fast - slow - dea) * 2 / 10;
        }
        const x = barX(i);
        const bar = 2 * (fast - slow - dea);
        diffs.push(x + ',' + macdY(fast - slow).toFixed(1));
        deas.push(x + ',' + macdY(dea).toFixed(1));
        s += line(x, 830, x, Math.round(macdY(bar)), bar > 0 ? 'bar-up' : 'bar-dn');
    });
    s += poly(deas.join(' '), 'ma-y') + poly(diffs.join(' '), 'ma-w');

    s += line(13.5, 656, 13.5, 1007, 'cursor') + line(13.5, 754, 13.5, 830, 'bar-dn');
    s += line(1608.5, 656, 1608.5, 1013, 'axis');
    document.getElementById('macd-plot').innerHTML = s;
}

// 时间, 价格, 方向, 手数, 手数颜色, 增仓
const ticks = [
    ['18:17', 3459, '', 6, 'gr', -1], [':29', 3460, 'up', 2, 'r', -1], [':30', 3459, 'down', 1, 'gr', 0],
    [':31', 3460, 'up', 7, 'r', 0], [':31', 3458, 'down', 1, 'gr', 0], [':32', 3458, '', 1, 'gr', 0],
    [':32', 3458, '', 2, 'gr', -1], [':33', 3459, 'up', 2, 'r', 0], [':33', 3458, 'down', 1, 'gr', 0],
    [':34', 3458, '', 1, 'gr', 0], [':34', 3459, 'up', 6, 'r', 0], [':35', 3458, 'down', 1, 'gr', 0],
    [':35', 3459, 'up', 2, 'r', 0], [':37', 3459, '', 1, 'r', 1], [':38', 3459, '', 1, 'r', 0],
    [':38', 3459, '', 3, 'r', 3], [':39', 3458, 'down', 5, 'gr', 1], [':40', 3459, 'up', 1, 'r', 0],
    [':42', 3459, 'down', 2, 'gr', 1], [':44', 3460, 'up', 1, 'r', 1], [':44', 3459, 'down', 2, 'gr', 0],
    [':45', 3460, 'up', 11, 'r', 11], [':46', 3460, '', 3, 'r', 0]
];

function drawTicks() {
    document.getElementById('tick-table').innerHTML = ticks.map(([time, price, dir, lots, color, change], i) => {
        const arrow = dir ? `<svg viewBox="0 0 12 14"><use href="#i-${dir}"/></svg>` : '';
        const changeColor = change > 0 ? 'r' : change < 0 ? 'gr' : 'g';
        return `<tr><td class="w">${time}</td><td class="w">${i === 0 ? '14:17' : ''}</td><td class="gr">${price}</td>
            <td class="${dir === 'up' ? 'r' : 'gr'}">${arrow}</td><td class="${color}">${lots}</td><td class="${changeColor}">${change}</td></tr>`;
    }).join('');
}

drawPrice();
drawMacd();
drawTicks();
```
